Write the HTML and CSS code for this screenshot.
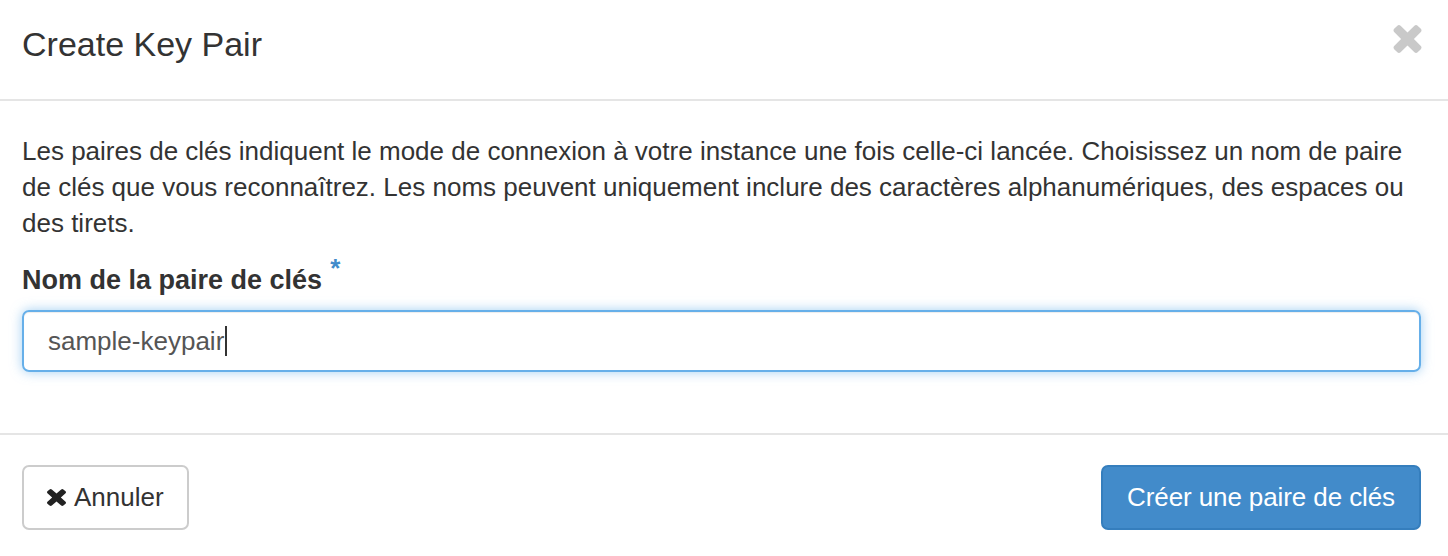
FILE: index.html
```html
<!DOCTYPE html>
<html lang="fr">
<head>
<meta charset="utf-8">
<title>Create Key Pair</title>
<link rel="stylesheet" href="styles.css">
</head>
<body>
<div class="modal">
  <div class="modal-header">
    <h4 class="modal-title">Create Key Pair</h4>
    <button class="close" type="button" aria-label="Fermer">
      <svg viewBox="110 366 1188 1188" width="29" height="28" aria-hidden="true"><path d="M1298 1322q0 40-28 68l-136 136q-28 28-68 28t-68-28l-294-294-294 294q-28 28-68 28t-68-28l-136-136q-28-28-28-68t28-68l294-294-294-294q-28-28-28-68t28-68l136-136q28-28 68-28t68 28l294 294 294-294q28-28 68-28t68 28l136 136q28 28 28 68t-28 68l-294 294 294 294q28 28 28 68z"/></svg>
    </button>
  </div>
  <div class="modal-body">
    <p class="help">Les paires de clés indiquent le mode de connexion à votre instance une fois celle-ci lancée. Choisissez un nom de paire de clés que vous reconnaîtrez. Les noms peuvent uniquement inclure des caractères alphanumériques, des espaces ou des tirets.</p>
    <div class="form-group">
      <label class="control-label">Nom de la paire de clés<span class="required">*</span></label>
      <div class="form-control" role="textbox">sample-keypair<span class="caret"></span></div>
    </div>
  </div>
  <div class="modal-footer">
    <button class="btn btn-default" type="button">
      <svg class="btn-icon" viewBox="110 366 1188 1188" width="19" height="17" preserveAspectRatio="none" aria-hidden="true"><path d="M1298 1322q0 40-28 68l-136 136q-28 28-68 28t-68-28l-294-294-294 294q-28 28-68 28t-68-28l-136-136q-28-28-28-68t28-68l294-294-294-294q-28-28-28-68t28-68l136-136q28-28 68-28t68 28l294 294 294-294q28-28 68-28t68 28l136 136q28 28 28 68t-28 68l-294 294 294 294q28 28 28 68z"/></svg>
      Annuler
    </button>
    <button class="btn btn-primary" type="button">Créer une paire de clés</button>
  </div>
</div>
</body>
</html>
```
FILE: styles.css
```css
html, body {
  margin: 0;
  padding: 0;
  background: #fff;
}
body {
  font-family: "Liberation Sans", Arial, sans-serif;
  font-size: 26px;
  line-height: 36px;
  color: #333;
}
.modal {
  width: 1448px;
  height: 556px;
  overflow: hidden;
  background: #fff;
}
.modal-header {
  display: flex;
  justify-content: space-between;
  align-items: flex-start;
  padding: 26px 26px 0 22px;
  height: 73px;
  border-bottom: 2px solid #e5e5e5;
}
.modal-title {
  margin: 0;
  font-size: 34px;
  line-height: 37px;
  font-weight: normal;
  color: #333;
}
.close {
  border: 0;
  background: none;
  padding: 0;
  margin: -1px 0 0 0;
  color: #c9c9c9;
  fill: currentColor;
  cursor: pointer;
  display: block;
}
.close svg { display: block; }
.modal-body {
  padding: 32px 27px 0 22px;
  height: 300px;
}
.help {
  margin: 0 0 21px;
}
.control-label {
  display: block;
  font-weight: bold;
  font-size: 27px;
  margin-bottom: 12px;
}
.required {
  color: #428bca;
  font-size: 26px;
  position: relative;
  top: -12px;
  margin-left: 8px;
  line-height: 0;
}
.form-control {
  box-sizing: border-box;
  height: 62px;
  padding: 10px 24px;
  border: 2px solid #66afe9;
  border-radius: 7px;
  box-shadow: inset 0 1px 1px rgba(0,0,0,.075), 0 0 12px rgba(102,175,233,.6);
  color: #555;
  font-size: 26px;
  line-height: 38px;
  display: flex;
  align-items: center;
}
.caret {
  display: inline-block;
  width: 2px;
  height: 30px;
  background: #333;
  margin-left: 1px;
}
.modal-footer {
  border-top: 2px solid #e5e5e5;
  display: flex;
  justify-content: space-between;
  padding: 30px 27px 0 22px;
}
.btn {
  font-family: "Liberation Sans", Arial, sans-serif;
  font-size: 26px;
  line-height: 37px;
  padding: 12px 23px;
  border-radius: 7px;
  border: 2px solid #ccc;
  background: #fff;
  color: #333;
  display: flex;
  align-items: center;
  gap: 8px;
  cursor: pointer;
}
.btn-icon { fill: #222; display: block; }
.btn-primary {
  background: #428bca;
  border-color: #357ebd;
  color: #fff;
  padding: 12px 24px;
  letter-spacing: -0.1px;
}
```
